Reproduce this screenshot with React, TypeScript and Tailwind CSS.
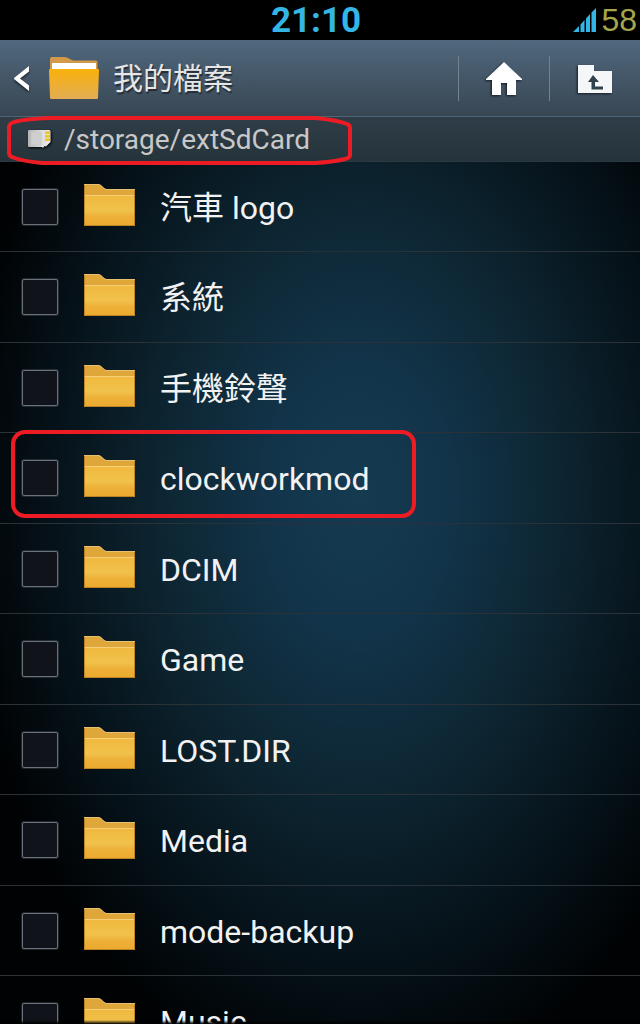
import { useState } from 'react';

const folders = [
    '汽車 logo',
    '系統',
    '手機鈴聲',
    'clockworkmod',
    'DCIM',
    'Game',
    'LOST.DIR',
    'Media',
    'mode-backup',
    'Music',
];

function SignalIcon() {
    return (
        <svg viewBox="0 0 24 26" className="h-[26px] w-6" fill="#33b5e5" aria-hidden="true">
            <path d="M0 25 6 19V25ZM7.5 17.5 11.5 13V25H7.5ZM13 11.5 17 7V25H13ZM18.5 5.5 23 1V25H18.5Z" />
        </svg>
    );
}

function StatusBar() {
    return (
        <div className="relative flex h-10 shrink-0 items-center justify-center bg-black">
            <span className="pt-0.5 pr-2 text-[35px] leading-10 font-bold text-[#33b5e5]">21:10</span>
            <div className="absolute inset-y-0 right-[3px] flex items-center gap-1">
                <SignalIcon />
                <span className="font-['Liberation_Sans',sans-serif] text-[32px] leading-10 text-[#a5a54a]">58</span>
            </div>
        </div>
    );
}

function AppFolderIcon() {
    return (
        <svg viewBox="0 0 50 42" className="h-[42px] w-[50px]" aria-hidden="true">
            <defs>
                <linearGradient id="app-front" x1="0" y1="0" x2="0" y2="1">
                    <stop offset="0" stopColor="#f9b10b" />
                    <stop offset="1" stopColor="#e3ad55" />
                </linearGradient>
            </defs>
            <path d="M1 13V2Q1 0 3 0H15Q18 0 21 2Q23 3.500 26 3.500H47Q48.500 3.500 48.500 5V13Z" fill="#d39a4a" />
            <path d="M3 6H47V13H3Z" fill="#fff" />
            <path d="M0 13Q0 12 1 12H49Q50 12 50 13L49 40.500Q49 42 47.500 42H2.500Q1 42 1 40.500Z" fill="url(#app-front)" />
        </svg>
    );
}

function SdCardIcon() {
    return (
        <svg viewBox="0 0 24 19" className="h-[19px] w-6 drop-shadow-[1px_1px_1px_#000]" aria-hidden="true">
            <defs>
                <linearGradient id="sd" x1="0" y1="0" x2="1" y2="0">
                    <stop offset="0" stopColor="#b4b4b4" />
                    <stop offset="0.5" stopColor="#d8d8d8" />
                    <stop offset="1" stopColor="#ececec" />
                </linearGradient>
            </defs>
            <path d="M1 0H21Q22.500 0 22.500 1.500V12L18 16.500L16.500 16L15 18L14 17H1Q0 17 0 16V1Q0 0 1 0Z" fill="url(#sd)" />
            <path d="M3 2H13V15H3Z" fill="#cfcfcf" stroke="#bcbcbc" strokeWidth="0.5" />
            <path d="M17 1.500H22V4H17ZM17 5H22V7.500H17ZM17 8.500H22V11H17Z" fill="#f0c419" />
        </svg>
    );
}

function FolderIcon() {
    return (
        <svg viewBox="0 0 51 42" className="h-[42px] w-[51px] shrink-0" aria-hidden="true">
            <defs>
                <linearGradient id="folder-front" x1="0" y1="0" x2="0" y2="1">
                    <stop offset="0" stopColor="#f0b83e" />
                    <stop offset="0.5" stopColor="#f1c24b" />
                    <stop offset="0.7" stopColor="#edb038" />
                    <stop offset="1" stopColor="#eca92e" />
                </linearGradient>
            </defs>
            <path d="M0 0H14Q16 0 18 2L20 4Q21 5 23 5H51V42H0Z" fill="#dfa639" />
            <path d="M0 11H51V42H0Z" fill="url(#folder-front)" />
            <path d="M0 11.500H51" stroke="#f7cf79" />
            <path d="M0 0.500H14Q16 0.500 18 2.500L20 4.500Q21 5.500 23 5.500H51" fill="none" stroke="#e6bf73" />
            <path d="M0.500 1V41.500H50.500V6" fill="none" stroke="#a87420" strokeOpacity="0.7" />
        </svg>
    );
}

function Header() {
    return (
        <header className="flex h-[77px] shrink-0 items-center border-b border-[#4c6677] bg-linear-to-b from-[#50687d] to-[#384653]">
            <button type="button" aria-label="返回" className="flex items-center gap-[19px] pl-3.5">
                <svg viewBox="0 0 16 25" className="h-[25px] w-4 drop-shadow-[0_2px_1px_#1f2a33]" aria-hidden="true">
                    <path d="M15 0V5.500L6 12.500L15 19.500V25L0 13V12Z" fill="#fff" />
                </svg>
                <AppFolderIcon />
            </button>
            <h1 className="ml-3.5 flex-1 pt-0.5 text-[30px] leading-10 text-[#e6e6e6] [text-shadow:1px_2px_1px_#222c35]">
                我的檔案
            </h1>
            <button
                type="button"
                aria-label="首頁"
                className="flex h-[45px] w-[91px] items-center justify-center border-l border-[#73828f]"
            >
                <svg viewBox="0 0 36 33" className="h-[33px] w-9 drop-shadow-[-1px_1px_1px_#141c24]" aria-hidden="true">
                    <path d="M18 0 36 17V18H30V33H21V21H15V33H6V18H0V17Z" fill="#fff" />
                </svg>
            </button>
            <button
                type="button"
                aria-label="上層資料夾"
                className="flex h-[45px] w-[91px] items-center justify-center border-l border-[#73828f] pt-0.5"
            >
                <svg viewBox="0 0 34 28" className="h-7 w-[34px] drop-shadow-[-1px_1px_1px_#141c24]" aria-hidden="true">
                    <path d="M0 0H16V6H34V28H0Z" fill="#f4f6f8" />
                    <path d="M15 10 21 17H17V21.500H25V24.500H13.500V17H10Z" fill="#2f414d" />
                </svg>
            </button>
        </header>
    );
}

function PathBar() {
    return (
        <div className="relative flex h-[45px] shrink-0 items-center gap-3 border-b border-[#2a3941] bg-linear-to-b from-[#303d48] to-[#25343b] pl-7">
            <SdCardIcon />
            <span className="pt-0.5 text-[28px] leading-10 text-[#c8c8c8]">/storage/extSdCard</span>
            <svg viewBox="0 0 346 50" className="absolute -top-[2px] left-[7px] z-10 h-[50px] w-[346px]" aria-hidden="true">
                <path
                    d="M42 3H308Q330 5 340 9Q343 10 343 13V40Q343 43 338 44Q326 47 308 48H35Q14 46 5 42Q2 41 2 38V12Q2 9 7 7Q18 4 42 3Z"
                    fill="none"
                    stroke="#ed1c24"
                    strokeWidth="4"
                />
            </svg>
        </div>
    );
}

function FolderRow({ name, marked }: { name: string; marked?: boolean }) {
    const [checked, setChecked] = useState(false);

    return (
        <li className="relative shrink-0 border-b border-[#2b3237] odd:h-[90px] even:h-[91px]">
            <label className="flex h-full items-center pl-[22px]">
                <input
                    type="checkbox"
                    checked={checked}
                    onChange={(e) => setChecked(e.target.checked)}
                    className="size-9 shrink-0 appearance-none rounded-xs border border-[#69727a] bg-[#10141a] ring-1 ring-[#69727a]/30 checked:bg-[#33b5e5]"
                />
                <span className="ml-[26px] pb-1">
                    <FolderIcon />
                </span>
                <span className="ml-[25px] pt-0.5 text-[32px] leading-10 text-[#f2f2f2]">{name}</span>
            </label>
            {marked && (
                <div className="pointer-events-none absolute -top-[3px] left-[11px] h-[88px] w-[405px] rounded-[14px] border-4 border-[#ed1c24]" />
            )}
        </li>
    );
}

export default function App() {
    return (
        <div className="flex h-screen flex-col overflow-hidden bg-black font-[Roboto,'Noto_Sans_CJK_TC',sans-serif]">
            <StatusBar />
            <Header />
            <PathBar />
            <main className="relative min-h-0 flex-1 overflow-hidden bg-[radial-gradient(ellipse_400px_600px_at_56%_39%,#153b51_0%,#12344a_22%,#0d2531_50%,#06131b_75%,#000203_100%)]">
                <ul className="flex flex-col">
                    {folders.map((name) => (
                        <FolderRow key={name} name={name} marked={name === 'clockworkmod'} />
                    ))}
                </ul>
                <div className="pointer-events-none absolute inset-x-0 bottom-0 h-1 bg-linear-to-b from-transparent to-black" />
            </main>
        </div>
    );
}
